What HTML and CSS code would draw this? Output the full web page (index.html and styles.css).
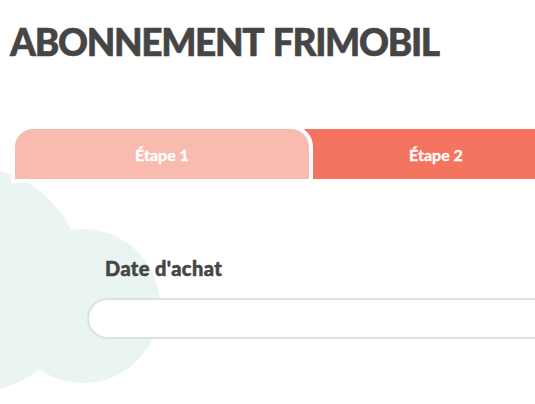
FILE: index.html
```html
<!DOCTYPE html>
<html lang="fr">

<head>
	<meta charset="UTF-8">
	<title>Abonnement Frimobil</title>
	<link rel="stylesheet" href="styles.css">
</head>

<body>

	<div class="cloud">
		<span class="puff puffBig"></span>
		<span class="puff puffSmall"></span>
	</div>

	<header>
		<h1>ABONNEMENT FRIMOBIL</h1>
	</header>

	<nav class="steps">
		<div class="step stepDone">Étape 1</div>
		<div class="step stepActive">Étape 2</div>
	</nav>

	<form class="formContainer">
		<label for="purchaseDate">Date d'achat</label>
		<input type="text" id="purchaseDate">
	</form>

</body>

</html>
```

FILE: styles.css
```css
* {
	margin: 0;
	padding: 0;
	outline: 0;
	box-sizing: border-box;
}

body {
	font-family: Lato, 'Open Sans', sans-serif;
	background-color: #fff;
	color: #444;
	width: 535px;
	height: 404px;
	overflow: hidden;
	position: relative;
}

/* decorative background cloud */
.cloud {
	position: absolute;
	top: 0;
	left: 0;
	width: 100%;
	height: 100%;
	z-index: 0;
}

.puff {
	position: absolute;
	border-radius: 50%;
	background-color: #eaf5f3;
}

.puffBig {
	left: -143px;
	top: 167px;
	width: 226px;
	height: 226px;
}

.puffSmall {
	left: 6px;
	top: 229px;
	width: 154px;
	height: 154px;
}

header {
	position: relative;
	z-index: 1;
	padding: 20px 0 0 10px;
}

header h1 {
	font-size: 37px;
	font-weight: 900;
	line-height: 1.2;
	color: #454545;
	letter-spacing: -1.3px;
	word-spacing: 3px;
	-webkit-text-stroke: 0.6px #454545;
}

.steps {
	position: relative;
	z-index: 1;
	display: flex;
	margin: 65px 0 0 15px;
	width: 700px;
}

.step {
	width: 294px;
	height: 50px;
	flex-shrink: 0;
	display: flex;
	align-items: center;
	justify-content: center;
	color: #fff;
	font-size: 16px;
	font-weight: 700;
	-webkit-text-stroke: 0.3px #fff;
	border-radius: 18px 18px 0 0;
}

.stepDone {
	position: relative;
	z-index: 2;
	background-color: #f9bbaf;
	box-shadow: 0 0 0 4px #fff;
}

.stepActive {
	position: relative;
	z-index: 1;
	margin-left: -20px;
	background-color: #f5745f;
}

.formContainer {
	position: relative;
	z-index: 1;
	display: flex;
	flex-direction: column;
	padding: 77px 0 0 87px;
}

.formContainer label {
	font-size: 20px;
	font-weight: 900;
	line-height: 1.2;
	letter-spacing: 0.4px;
	color: #454545;
	-webkit-text-stroke: 0.5px #454545;
	margin-left: 18px;
}

.formContainer input {
	margin-top: 18px;
	width: 480px;
	height: 41px;
	border: 2px solid #d9e3e0;
	border-radius: 21px;
	background-color: #fff;
	padding: 0 20px;
	font-family: inherit;
	font-size: 16px;
}
```
